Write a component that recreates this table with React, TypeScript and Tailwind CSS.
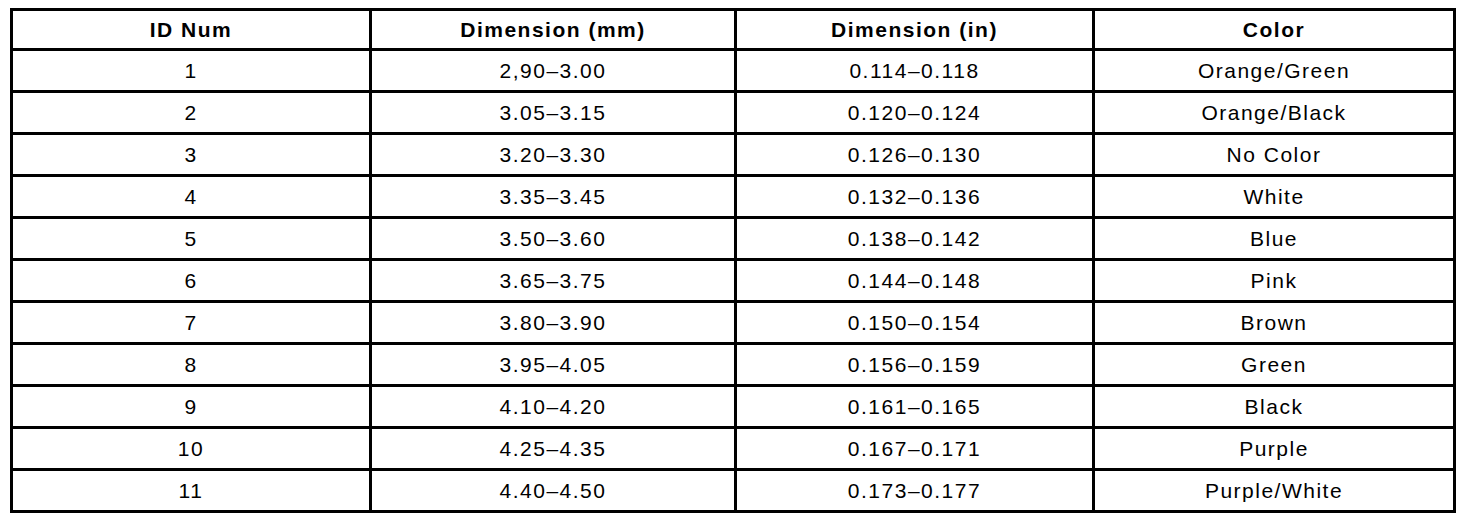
const rows: [string, string, string, string][] = [
  ["1", "2,90–3.00", "0.114–0.118", "Orange/Green"],
  ["2", "3.05–3.15", "0.120–0.124", "Orange/Black"],
  ["3", "3.20–3.30", "0.126–0.130", "No Color"],
  ["4", "3.35–3.45", "0.132–0.136", "White"],
  ["5", "3.50–3.60", "0.138–0.142", "Blue"],
  ["6", "3.65–3.75", "0.144–0.148", "Pink"],
  ["7", "3.80–3.90", "0.150–0.154", "Brown"],
  ["8", "3.95–4.05", "0.156–0.159", "Green"],
  ["9", "4.10–4.20", "0.161–0.165", "Black"],
  ["10", "4.25–4.35", "0.167–0.171", "Purple"],
  ["11", "4.40–4.50", "0.173–0.177", "Purple/White"],
];

const headers = ["ID Num", "Dimension (mm)", "Dimension (in)", "Color"];

export default function App() {
  return (
    <div className="w-[1472px] h-[520px] bg-white pt-[8px] pl-[10px] font-['Liberation_Sans',Arial,sans-serif] text-black">
      <div className="grid grid-cols-[359px_365px_358px_361px] w-fit border-l-[3px] border-t-[3px] border-black">
        {headers.map((h) => (
          <div
            key={h}
            className="h-[40px] flex items-center justify-center border-r-[3px] border-b-[3px] border-black text-[21px] font-bold tracking-[1.5px]"
          >
            {h}
          </div>
        ))}
        {rows.map((r) =>
          r.map((cell, i) => (
            <div
              key={r[0] + "-" + i}
              className="h-[42px] flex items-center justify-center border-r-[3px] border-b-[3px] border-black text-[21px] tracking-[1.5px]"
            >
              {cell}
            </div>
          ))
        )}
      </div>
    </div>
  );
}
